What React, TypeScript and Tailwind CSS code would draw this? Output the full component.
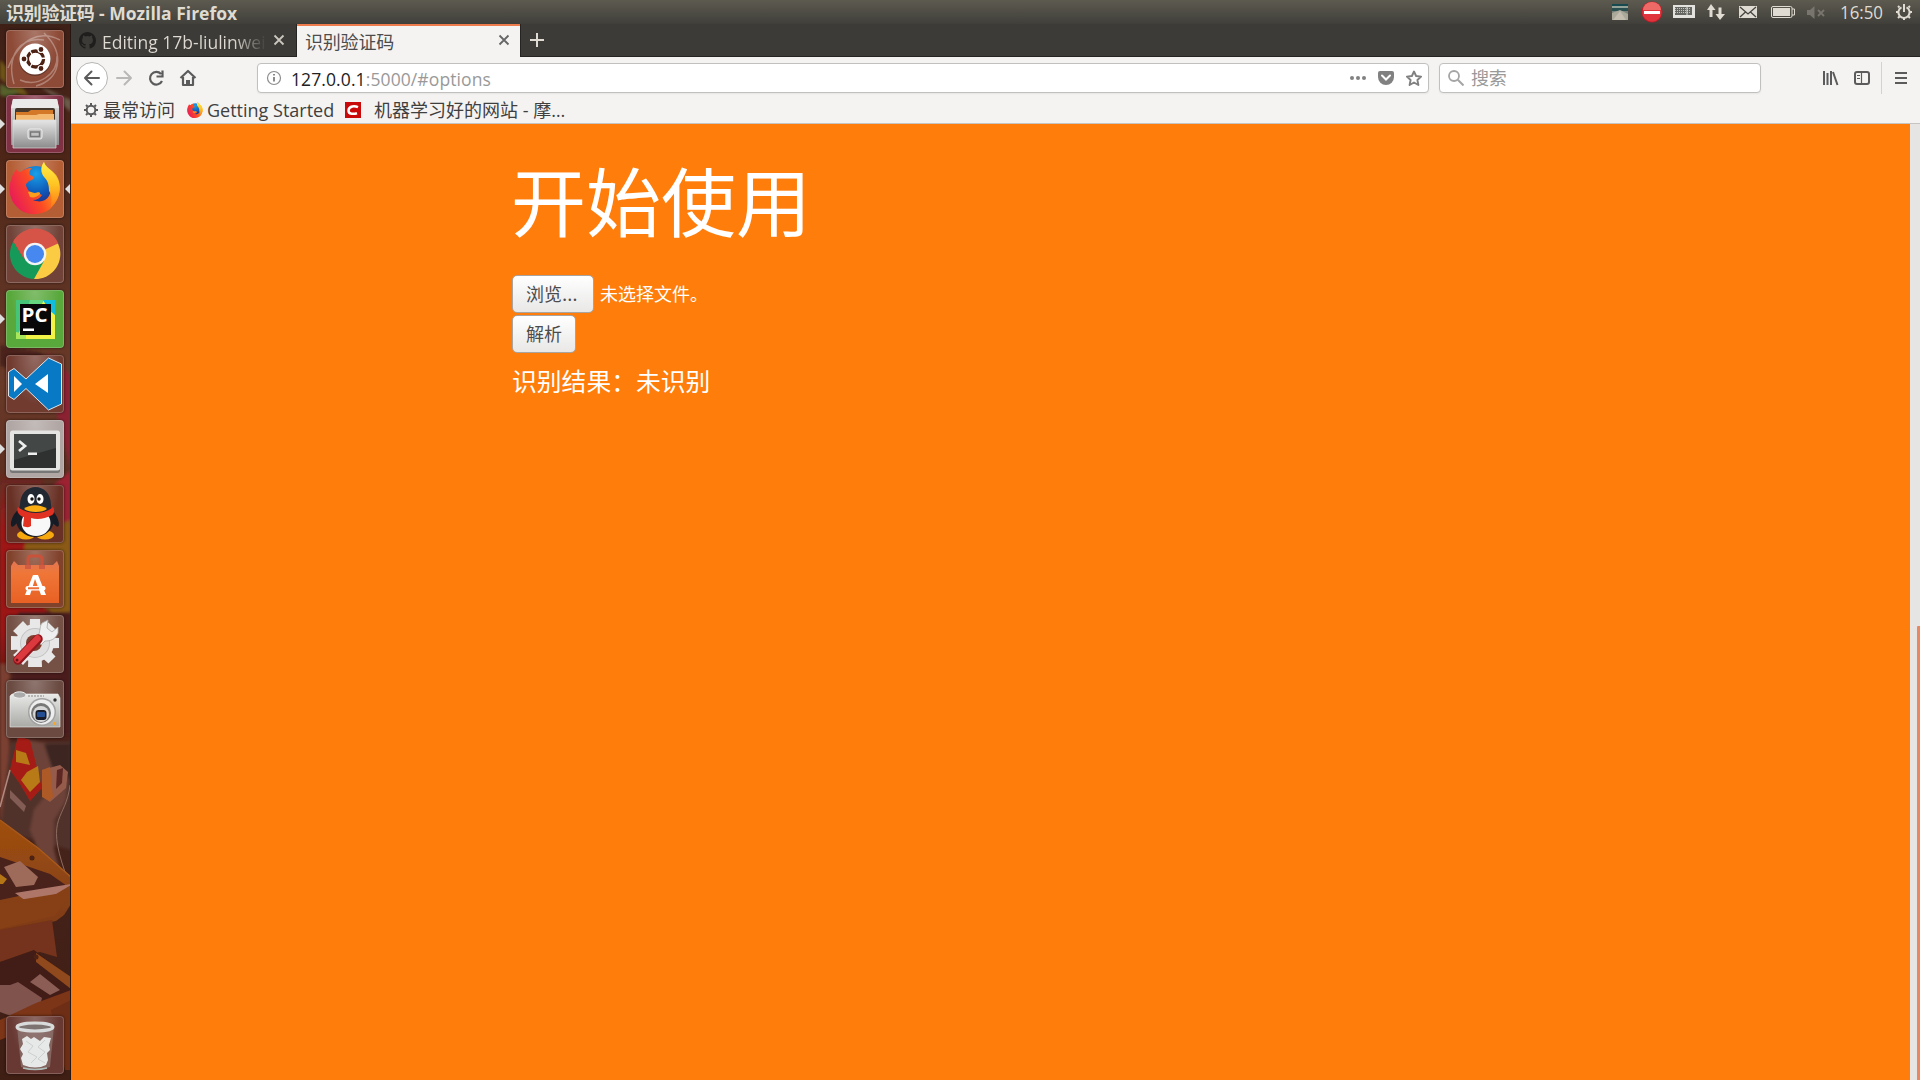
import React from "react";

const sans = "font-['Open_Sans','Noto_Sans_CJK_SC',sans-serif]";

function Wallpaper() {
  return (
    <svg className="absolute inset-0 h-[1056px] w-[71px]" viewBox="0 24 71 1056" preserveAspectRatio="none">
      <defs>
        <linearGradient id="wall" x1="0" y1="0" x2="0" y2="1">
          <stop offset="0" stopColor="#3f2017" />
          <stop offset=".13" stopColor="#4e2618" />
          <stop offset=".25" stopColor="#5f3323" />
          <stop offset=".34" stopColor="#6a3a28" />
          <stop offset=".44" stopColor="#5c2e21" />
          <stop offset=".56" stopColor="#552018" />
          <stop offset=".7" stopColor="#47241c" />
          <stop offset="1" stopColor="#3f1e14" />
        </linearGradient>
        <linearGradient id="redband" x1="0" y1="0" x2="0" y2="1">
          <stop offset="0" stopColor="#a8181a" stopOpacity="0" />
          <stop offset=".3" stopColor="#a01819" />
          <stop offset=".8" stopColor="#9c1614" />
          <stop offset="1" stopColor="#701510" />
        </linearGradient>
        <linearGradient id="crate" x1="0" y1="0" x2="0" y2="1">
          <stop offset="0" stopColor="#a0500f" />
          <stop offset="1" stopColor="#7d3a18" />
        </linearGradient>
        <filter id="soft"><feGaussianBlur stdDeviation="1.6" /></filter>
        <filter id="fine"><feGaussianBlur stdDeviation=".7" /></filter>
      </defs>
      <rect y="24" width="71" height="1056" fill="url(#wall)" />
      <g filter="url(#soft)">
        <path d="M0 60 12 72 30 98 18 94 0 78Z" fill="#6e5518" />
        <path d="M0 84 20 92 10 98 0 95Z" fill="#55602a" />
        <path d="M40 86 71 100V112L50 94Z" fill="#6d5a48" />
        <path d="M0 345 40 352 71 382V412L42 380 0 366Z" fill="#4b211b" />
        <path d="M48 352 71 376V470L58 420Z" fill="#8b2430" />
        <path d="M0 470H40L60 560 30 672H0Z" fill="url(#redband)" />
        <path d="M24 560C22 520 50 510 71 508V616C44 618 26 590 24 560Z" fill="#8a5a18" />
        <path d="M48 490 71 470V520L54 526Z" fill="#9c2232" />
        <path d="M18 612H71V735H8Z" fill="#4c1f1b" />
        <path d="M0 664H10L8 820H0Z" fill="#7c4031" />
        <path d="M10 742H71V850L0 830Z" fill="#51302a" />
        <path d="M18 738 50 744 70 748 66 800 54 820 54 850 60 872 38 850 30 830 34 810 46 795Z" fill="#6d4238" />
        <path d="M44 744H71V780L52 768Z" fill="#3c2822" />
      </g>
      <g filter="url(#fine)">
        <path d="M18 736 30 740 42 788 30 801 20 784 10 770Z" fill="#a51f14" />
        <path d="m16 750 10 3 4 12-14-3Zm11 22 11-6 2 16-10 10-9-12Z" fill="#b77a18" />
        <path d="M42 770 60 765 68 772 66 788 50 802 42 796Z" fill="#965b4c" />
        <path d="m42 770 8-3 3 30-4 4-7-4Z" fill="#ad5a26" />
        <path d="m57 770 6-2-1 15-6 6Z" fill="#5c2824" />
        <path d="M0 807 10 770" stroke="#b08a80" strokeWidth="1.500" />
        <path d="m10 790 16 16-2 6-14-14Z" fill="#825b54" />
        <path d="M70 785C66 820 45 815 65 872" fill="none" stroke="#8d6b60" strokeWidth="1" />
        <path d="M0 820 38 848 71 877V904L64 915 56 921 0 932Z" fill="url(#crate)" />
        <path d="M0 820 38 848 71 877" fill="none" stroke="#a9591b" strokeWidth="1.500" />
        <path d="M0 857 50 874 67 886 0 900Z" fill="#4a211c" />
        <path d="m4 867 16-6 18 16-4 8-18 2Z" fill="#9e6b5a" />
        <path d="m0 874 7 5-4 5H0Z" fill="#b47519" />
        <path d="m15 893 56-9v7L26 901Z" fill="#ad7668" />
        <path d="m0 903 56-9 15-9v8l-16 23-55 13Z" fill="#873f14" />
        <path d="M0 930 52 920 57 957 40 952 0 962Z" fill="#74331a" />
        <path d="M0 962 34 950 71 978V1004L40 1008 0 990Z" fill="#421b17" />
        <path d="m36 953 35 24v12L36 962Z" fill="#90491a" />
        <path d="m30 982 10-8 20 16-10 5Z" fill="#8b5d54" />
        <path d="m10 985 8-3 24 16-4 16-16 6-22-8V985Z" fill="#80524e" />
        <path d="M0 1020 36 1003 71 990V1009L35 1026 0 1040Z" fill="#7b3413" />
        <path d="m51 1010 20-10v70h-6Z" fill="#6e2d12" />
        <circle cx="32" cy="858" r="2.500" fill="#4d2112" />
        <circle cx="36" cy="957" r="2.500" fill="#4d2112" />
      </g>
      <path d="M70.500 24V1080" stroke="#271611" />
    </svg>
  );
}

type TileProps = { bg: string; left?: boolean; right?: boolean; children: React.ReactNode };

function Tile({ bg, left, right, children }: TileProps) {
  return (
    <div className="relative flex w-full shrink-0 pl-1.5">
      <div className={`relative size-[58px] overflow-hidden rounded-[4px] border border-white/20 shadow-[0_0_3px_rgba(0,0,0,0.6)] ${bg}`}>
        <div className="absolute -inset-px bg-radial-[at_50%_0%] from-white/25 to-transparent to-60%" />
        <svg className="absolute -left-px -top-px size-[58px]" viewBox="0 0 58 58">{children}</svg>
      </div>
      {left && (
        <svg className="absolute left-0 top-[23px] h-3 w-[5px]" viewBox="0 0 5 12"><path d="M0 1 5 6 0 11Z" fill="#dedede" /></svg>
      )}
      {right && (
        <svg className="absolute right-px top-[23px] h-3 w-[5px]" viewBox="0 0 5 12"><path d="M5 1 0 6 5 11Z" fill="#dedede" /></svg>
      )}
    </div>
  );
}

function FirefoxArt() {
  return (
    <>
      <defs>
        <linearGradient id="ffr" x1="0" y1=".7" x2="1" y2=".2">
          <stop offset="0" stopColor="#e8195a" />
          <stop offset=".45" stopColor="#fb4a25" />
          <stop offset=".8" stopColor="#ff9a18" />
          <stop offset="1" stopColor="#ffe634" />
        </linearGradient>
        <linearGradient id="ffy" x1="0" y1="0" x2="0" y2="1">
          <stop offset="0" stopColor="#fff04a" />
          <stop offset=".5" stopColor="#ffc423" />
          <stop offset="1" stopColor="#ff7a1a" />
        </linearGradient>
        <radialGradient id="ffb" cx=".5" cy=".2" r=".8">
          <stop offset="0" stopColor="#1aa0e8" />
          <stop offset=".6" stopColor="#0d58b8" />
          <stop offset="1" stopColor="#28257c" />
        </radialGradient>
      </defs>
      <circle cx="30" cy="26" r="20" fill="url(#ffb)" />
      <path d="M5 20C7 13 9 12 10 9c1 2 3 3 5 3 3-3 6-4 11-4-3 3-3 5-2 7l4 2c0 2-2 3-5 4l-3 3c0 4 3 8 7 9 3 1 6 0 9 2-2 3-5 5-9 5 7 3 13 1 16-4 3-6 2-13-1-18-7-5-8-11-4-16 1 5 8 8 12 13 7 10 4 25-6 34-9 7-24 7-32-1C3 40 2 28 5 20Z" fill="url(#ffr)" />
      <path d="M38 2c1 5 8 8 11 13 8 12 5 24-4 32 1-8 1-12-2-16 0-6-1-10-5-14-4-5-3-11 0-15Z" fill="url(#ffy)" />
      <path d="M22 32c3-1 5 1 7 1s5-2 5 1c-3 3-6 4-10 3Z" fill="#ff9e1d" />
    </>
  );
}

function Launcher() {
  return (
    <aside className="relative flex w-[71px] shrink-0 flex-col gap-[7px] overflow-hidden pt-1.5">
      <Wallpaper />
      <Tile bg="bg-[#8d4a36]">
        <path d="M2 38C14 8 34 0 54 10M8 54C0 26 14 6 38 10M30 56C54 50 60 24 38 3M14 50C32 58 52 44 51 26" fill="none" stroke="#fff" strokeOpacity=".3" strokeWidth="1.500" />
        <circle cx="29" cy="30" r="16" fill="#000" opacity=".3" />
        <circle cx="29" cy="29" r="15.500" fill="#fff" />
        <circle cx="29.500" cy="29" r="8" fill="none" stroke="#4d2113" strokeWidth="3.400" />
        <g stroke="#fff" strokeWidth="1.300"><path d="m29 29 12-1M29 29 22 18M29 29 22 40" /></g>
        <circle cx="29.500" cy="29" r="6" fill="#fff" />
        <g fill="#4d2113" stroke="#fff" strokeWidth="1.200"><circle cx="18" cy="29" r="3" /><circle cx="35" cy="19.500" r="3" /><circle cx="35" cy="38.500" r="3" /></g>
      </Tile>
      <Tile bg="bg-[#803043]" left>
        <defs><linearGradient id="cab" x1="0" y1="0" x2="0" y2="1"><stop offset="0" stopColor="#e6e6e6" /><stop offset="1" stopColor="#8c8c8c" /></linearGradient></defs>
        <path d="M7 4H51L53 13V50H5V13Z" fill="url(#cab)" />
        <path d="M7 4H51L53 13H5Z" fill="#e9e9e9" />
        <rect x="9" y="13" width="40" height="15" rx="2" fill="#45392f" />
        <path d="M10 17h12l3-2h22v10H10Z" fill="#d47927" />
        <path d="M10 20h20l3-1h15v7H10Z" fill="#f5ba72" />
        <path d="M7 25H50V53H7Z" fill="url(#cab)" stroke="#ddd" strokeWidth=".7" />
        <rect x="22" y="34" width="14" height="10" rx="2" fill="#bcbcbc" stroke="#eee" />
        <rect x="24.500" y="37" width="9" height="4.500" fill="#c3c3c3" stroke="#777" strokeWidth="1.500" />
      </Tile>
      <Tile bg="bg-[#b45e35]" left right><FirefoxArt /></Tile>
      <Tile bg="bg-[#714338]">
        <path d="M29 29 7.300 16.500A25 25 0 0 1 52 19Z" fill="#d65347" />
        <path d="M29 29 52 18.500A25 25 0 0 1 28 54Z" fill="#fbcb43" />
        <path d="M7.300 16.500A25 25 0 0 0 28 54L38 36 18 34Z" fill="#159a5a" />
        <path d="M29 18H52A25 25 0 0 0 7.300 16.500L18 34Z" fill="#d65347" />
        <circle cx="29" cy="29" r="11.300" fill="#f4f4f4" /><circle cx="29" cy="29" r="9" fill="#4688f0" />
      </Tile>
      <Tile bg="bg-[#59a83c]" left>
        <path d="M10 10H49V49H10Z" fill="#f1f346" />
        <path d="M10 10H38L30 25 10 40Z" fill="#66d67f" /><path d="M10 10H24L12 46H10Z" fill="#46c578" />
        <path d="M37 10H49V25L43 20Z" fill="#13bddc" /><path d="M10 42 20 44V49H10Z" fill="#a8e65a" />
        <path d="M14 14H45V45H14Z" fill="#080808" />
        <text x="15.500" y="32" fontFamily="Open Sans, sans-serif" fontWeight="700" fontSize="19" textLength="26" lengthAdjust="spacingAndGlyphs" fill="#fff">PC</text>
        <path d="M17 38.500H28V41H17Z" fill="#fff" />
      </Tile>
      <Tile bg="bg-[#713b30]">
        <path d="M42.500 3 55.500 9V49L42.500 55 20 33.500 8 44.500 2.500 41V17L8 13.500 20 24Z" fill="#0879c5" stroke="#e5e5e5" strokeWidth="1" />
        <path d="M42 19V38L29 29ZM8 21V37L16 29Z" fill="#fff" />
      </Tile>
      <Tile bg="bg-[#b0a6a3]" left>
        <rect x="4" y="11" width="50" height="42" rx="2.500" fill="#777" />
        <rect x="4" y="10.500" width="50" height="40" rx="2.500" fill="#e4e4e2" />
        <path d="M8 14H50V48H8Z" fill="#2e3130" /><path d="M8 14H50V28L8 40Z" fill="#434847" />
        <path d="m13 21 6 5-6 5" fill="none" stroke="#eee" strokeWidth="2.700" /><path d="M22 32.500h9V35h-9Z" fill="#eee" />
      </Tile>
      <Tile bg="bg-[#693126]">
        <ellipse cx="20" cy="50" rx="9" ry="4.500" fill="#f7a80c" /><ellipse cx="39" cy="50" rx="9" ry="4.500" fill="#f7a80c" />
        <path d="M13 24C4 31 3 45 8 41l7-7M45 24c9 8 10 21 5 17l-8-7" fill="#151b25" />
        <ellipse cx="29" cy="34" rx="19" ry="18" fill="#171c25" /><ellipse cx="30" cy="38" rx="14.500" ry="13" fill="#f8f8f8" />
        <path d="M14 20C14-4 45-4 45 20l1 8H12Z" fill="#222832" />
        <ellipse cx="25" cy="14" rx="3.500" ry="5" fill="#fff" /><ellipse cx="34" cy="14" rx="3.500" ry="5" fill="#fff" />
        <circle cx="26" cy="14" r="1.700" fill="#111" /><circle cx="33" cy="14" r="1.700" fill="#111" />
        <path d="M12 22c10 8 26 8 35 0 2 3 1 7-1 8-7 4-15 5-21 3v8c-3 2-6 1-8 0l1-9c-5-1-8-6-6-10Z" fill="#e03022" />
        <path d="M18 24c5-5 17-5 23 0-4 4-18 4-23 0Z" fill="#faac13" />
      </Tile>
      <Tile bg="bg-[#81422c]">
        <defs><linearGradient id="bag" x1="0" y1="0" x2="0" y2="1"><stop offset="0" stopColor="#e27755" /><stop offset=".3" stopColor="#ef7637" /><stop offset="1" stopColor="#e86024" /></linearGradient></defs>
        <path d="m8 11 4 4H47l4-4 2 5V53H5V16Z" fill="url(#bag)" />
        <path d="M22 18V9c0-2 1-3 3-3h8c2 0 3 1 3 3v9" fill="none" stroke="#c8523a" strokeWidth="3" /><path d="M19 15h6v4h-6Zm14 0h6v4h-6Z" fill="#d15c42" />
        <path d="m19 45 8-20h5l8 20h-5L29 29l-5 16Z" fill="#fff" /><rect x="19.500" y="36" width="20" height="4.500" rx="2" fill="#fff" /><path d="M22 38.300h11" stroke="#ed713a" strokeWidth="2" />
      </Tile>
      <Tile bg="bg-[#745045]">
        <g transform="translate(29 28)" fill="#e8e8e8"><circle r="19" /><path d="M-5-24H5L7 24H-7Z" /><path d="M-5-24H5L7 24H-7Z" transform="rotate(45)" /><path d="M-5-24H5L7 24H-7Z" transform="rotate(90)" /><path d="M-5-24H5L7 24H-7Z" transform="rotate(135)" /></g>
        <circle cx="29" cy="28" r="15" fill="#c3c3c3" /><circle cx="29" cy="28" r="14" fill="#dfdfdf" /><circle cx="28" cy="28" r="8" fill="#803c2d" />
        <path d="M31 22C35 18 33 12 36 8l6-3-1 8 5 4 6-5v6c-3 7-8 8-13 8l-4 4Z" fill="#efefef" stroke="#a9a9a9" strokeWidth=".8" />
        <path d="m12 45 20-21" stroke="#92161e" strokeWidth="9.500" strokeLinecap="round" /><path d="m11.500 44.500 20-21" stroke="#dc393e" strokeWidth="6.500" strokeLinecap="round" /><circle cx="11" cy="45" r="1.500" fill="#6d1216" />
      </Tile>
      <Tile bg="bg-[#6a4a41]">
        <defs><linearGradient id="cam" x1="0" y1="0" x2="0" y2="1"><stop offset="0" stopColor="#e9e9e7" /><stop offset="1" stopColor="#a9a9a6" /></linearGradient></defs>
        <path d="M6 14H52L54 18V47H4V16Z" fill="url(#cam)" stroke="#eee" strokeWidth=".6" />
        <ellipse cx="13.500" cy="15" rx="6.500" ry="3.200" fill="#aaa" stroke="#eee" />
        <path d="M22 16h16" stroke="#888" strokeDasharray="2 1" /><circle cx="49" cy="20" r="1.700" fill="#333" /><path d="M47 42h3v3h-3Z" fill="#f6a62b" />
        <circle cx="36" cy="32" r="14" fill="#a3a3a3" /><circle cx="36" cy="32" r="12.500" fill="#eee" /><circle cx="35" cy="33" r="10" fill="#777" /><circle cx="35" cy="34" r="8" fill="#d7d7d7" /><rect x="29.500" y="30" width="11" height="10" rx="3" fill="#181c2a" /><rect x="31" y="32" width="8" height="5" rx="1" fill="#244e93" />
      </Tile>
      <div className="mt-auto pb-1.5">
        <Tile bg="bg-[#683832]">
          <path d="M11 10H48L44 51Q29 56 15 51Z" fill="#9d8f8b" fillOpacity=".5" />
          <path d="m16 23 5-3 4 3 3-2 6 4 4-4 7 1-2 7 1 5-3 3 1 7-2 5q-10 5-23 0l-2-7 2-4-3-5 3-5Z" fill="#e7e9e8" />
          <path d="m20 25 7 5-5 6 9 5-6 6M39 24l-7 7 7 5-7 7 7 4" fill="none" stroke="#ccd0cf" />
          <ellipse cx="29" cy="11" rx="18" ry="4" fill="#7d7370" stroke="#d9dbda" strokeWidth="3" /><path d="M17 52q12 3 24 0" fill="none" stroke="#afbdb9" strokeWidth="1.500" />
        </Tile>
      </div>
    </aside>
  );
}

function MenuBar() {
  return (
    <header className="flex h-6 shrink-0 items-center justify-between bg-linear-to-b from-[#5d5b50] to-[#403f3a] pl-1.5 text-[#dfdbd2]">
      <h1 className="whitespace-nowrap pt-0.5 text-[18px] leading-6 font-bold">
        <span className="tracking-[-0.3px]">识别验证码</span><span className="text-[17.5px]"> - Mozilla Firefox</span>
      </h1>
      <svg className="h-6 w-[308px]" viewBox="1612 0 308 24">
        <path d="M1612 4h16v16h-16Z" fill="#78827a" /><path d="M1612 4h16v2h-16Z" fill="#164a50" /><path d="M1612 6h16v3l-16-1Z" fill="#94a298" /><path d="M1612 8h16v3h-16Z" fill="#294f50" /><path d="m1612 13 8-3 8 4v6h-16Z" fill="#aaa99a" /><path d="m1613 20 7-9 6 9Z" fill="#c3beb0" />
        <circle cx="1652" cy="12" r="10.500" fill="#bd1d2b" /><circle cx="1652" cy="12" r="9.700" fill="#df343b" /><path d="M1643 10a9 8 0 0 1 18 0Z" fill="#ee6a66" /><path d="M1644 11h16v3h-16Z" fill="#fff" />
        <path d="M1673 5h22v13h-22Z" fill="#e4e2de" /><path d="M1675 7h17v8h-17Z" fill="#666662" /><path d="M1675 8.500h15m-15 2h15m-15 2h15" stroke="#c6c4bf" strokeDasharray="1 1" /><path d="M1687 7v8" stroke="#ddd" />
        <path d="m1707 10 4-6 4.500 6h-3v7h-3v-7ZM1720 20l-4.500-6h3V7.500h3V14h3.500Z" fill="#dfdbd2" />
        <path d="M1739 6h18v12h-18Z" fill="#dfdbd2" /><path d="m1740 7 8 7 8-7m-16 10 5.500-5m10.500 5-5.500-5" fill="none" stroke="#44433e" strokeWidth="1.300" />
        <rect x="1771.500" y="6.500" width="20.500" height="11" rx="1.500" fill="none" stroke="#dfdbd2" /><path d="M1773 8h17v8h-17Z" fill="#dfdbd2" /><path d="M1792 9h2.500v6h-2.500" fill="none" stroke="#dfdbd2" />
        <path d="M1807 10h3l4.500-4v13l-4.500-4h-3Z" fill="#77756d" /><path d="m1818 10 6 6m0-6-6 6" stroke="#77756d" strokeWidth="1.800" />
        <text x="1840" y="18.500" fontSize="17.500" textLength="43" lengthAdjust="spacingAndGlyphs" fill="#dfdbd2">16:50</text>
        <g stroke="#dfdbd2" fill="none" strokeWidth="2"><path d="M1901.500 7.300a5.600 5.600 0 1 0 5 0M1904 4v8" /><path d="m1898 6 1.500 1.500M1910 6l-1.500 1.500M1896 12h2m12 0h2m-14 6 1.500-1.500M1910 18l-1.500-1.500M1904 18v2" /></g>
      </svg>
    </header>
  );
}

const Close = ({ color }: { color: string }) => (
  <svg className="size-3 shrink-0" viewBox="0 0 12 12"><path d="m1.500 1.500 9 9m0-9-9 9" stroke={color} strokeWidth="1.800" /></svg>
);

function Tabs() {
  return (
    <div className="flex h-[33px] shrink-0 bg-[#3c3b37]">
      <div className="flex w-[226px] items-center border-b border-r border-[#252422] pl-2">
        <svg className="size-[17px] shrink-0" viewBox="0 0 16 16" fill="#1f1e1d"><path d="M8 0C3.580 0 0 3.580 0 8c0 3.540 2.290 6.530 5.470 7.590.4.070.55-.17.55-.38 0-.19-.01-.82-.01-1.490-2.010.37-2.530-.49-2.690-.94-.09-.23-.48-.94-.82-1.130-.28-.15-.68-.52-.01-.53.63-.01 1.080.58 1.230.82.72 1.210 1.870.87 2.330.66.07-.52.28-.87.51-1.070-1.780-.2-3.640-.89-3.640-3.950 0-.87.31-1.590.82-2.150-.08-.2-.36-1.020.08-2.120 0 0 .67-.21 2.200.82a7.600 7.600 0 0 1 4 0c1.530-1.040 2.200-.82 2.200-.82.44 1.100.16 1.920.08 2.120.51.56.82 1.270.82 2.150 0 3.070-1.870 3.750-3.650 3.950.29.25.54.73.54 1.480 0 1.070-.01 1.930-.01 2.200 0 .21.15.46.55.38A8 8 0 0 0 16 8c0-4.420-3.580-8-8-8Z" /></svg>
        <span className="ml-1.5 w-[165px] overflow-hidden whitespace-nowrap bg-linear-to-r from-[#dfdbd2] from-80% to-[#3c3b37] bg-clip-text pt-1 text-[17.5px] leading-7 text-transparent">Editing 17b-liulinwei</span>
        <span className="ml-1.5 flex"><Close color="#cbc7be" /></span>
      </div>
      <div className="flex w-[223px] items-center border-t-2 border-[#ee7b4c] bg-[#f4f3f2] pl-2 pr-[10px]">
        <span className="grow pt-px text-[18px] leading-7 tracking-[-0.2px] text-[#4c4c4c]">识别验证码</span><span className="flex pb-1"><Close color="#666" /></span>
      </div>
      <div className="grow border-b border-l border-[#252422] pl-2 pt-2">
        <svg className="size-4" viewBox="0 0 16 16"><path d="M8 1v14M1 8h14" stroke="#dfdbd2" strokeWidth="2" /></svg>
      </div>
    </div>
  );
}

function NavBar() {
  return (
    <div className="flex h-[42px] shrink-0 items-center">
      <svg className="h-[42px] w-[186px] shrink-0" viewBox="71 57 186 42" fill="none" stroke="#5b5b5b" strokeWidth="2">
        <circle cx="92" cy="78" r="15.500" fill="#fff" stroke="#b5b5b4" strokeWidth="1" />
        <path d="M99 78H85m6.500-6.500L85 78l6.500 6.500" strokeLinecap="round" strokeLinejoin="round" />
        <path d="M117 78h14m-6.500-6.500L131 78l-6.500 6.500" stroke="#b9b8b7" strokeLinecap="round" strokeLinejoin="round" />
        <path d="M162 81a6.300 6.300 0 1 1-1-7M162.500 70.500v6h-6" strokeWidth="2.200" />
        <path d="m180.500 78 7.500-7 7.500 7M183 77v8h10v-8" strokeWidth="2.200" strokeLinejoin="round" /><path d="M186 80h4v5h-4Z" fill="#5b5b5b" stroke="none" />
      </svg>
      <div className="flex h-[30px] w-[1172px] items-center rounded-[4px] border border-[#c0c0be] bg-white shadow-[0_1px_2px_rgba(0,0,0,0.06)]">
        <svg className="ml-2 size-4" viewBox="0 0 16 16"><circle cx="8" cy="8" r="6.500" fill="none" stroke="#8d8d8d" strokeWidth="1.200" /><path d="M8 7v4.500M8 4v1.600" stroke="#777" strokeWidth="1.700" /></svg>
        <span className="ml-[9px] grow whitespace-nowrap pt-0.5 text-[17.5px] leading-7 tracking-[0.1px] text-[#999]"><span className="text-[#222]">127.0.0.1</span>:5000/#options</span>
        <svg className="h-7 w-[80px]" viewBox="1348 64 80 28"><g fill="#818181"><circle cx="1352" cy="78" r="2" /><circle cx="1358" cy="78" r="2" /><circle cx="1364" cy="78" r="2" /><path d="M1380 71h12q2 0 2 2v4a8 8 0 0 1-16 0v-4q0-2 2-2Z" /></g><path d="m1382 75.500 4 4 4-4" fill="none" stroke="#fff" strokeWidth="2" strokeLinecap="round" /><path d="m1414 71.500 2.100 4.500 5 .6-3.700 3.400 1 5-4.400-2.500-4.400 2.500 1-5-3.700-3.400 5-.6Z" fill="none" stroke="#818181" strokeWidth="1.900" strokeLinejoin="round" /></svg>
      </div>
      <div className="ml-2.5 flex h-[30px] w-[322px] items-center rounded-[4px] border border-[#c0c0be] bg-white pl-2 shadow-[0_1px_2px_rgba(0,0,0,0.06)]">
        <svg className="size-4" viewBox="0 0 16 16" fill="none" stroke="#a5a5a5"><circle cx="6" cy="6" r="5" strokeWidth="1.800" /><path d="m9.800 9.800 5.700 5.700" strokeWidth="2" /></svg>
        <span className="ml-[7px] text-[18px] leading-7 tracking-[-0.2px] text-[#999]">搜索</span>
      </div>
      <svg className="ml-auto h-[42px] w-[110px]" viewBox="1810 57 110 42" fill="none" stroke="#5b5b5b">
        <path d="M1824 71v14M1827.500 73v12M1831 71v14M1833 72l4.500 13" strokeWidth="2" />
        <rect x="1855" y="72" width="14" height="12" rx="2" strokeWidth="2" /><path d="M1861.500 72v12M1857 75.500h3m-3 3h3" strokeWidth="1.200" />
        <path d="M1881.500 62v32" stroke="#d3d2d1" /><path d="M1895 73h12m-12 5h12m-12 5h12" strokeWidth="2" />
      </svg>
    </div>
  );
}

function Bookmarks() {
  return (
    <div className="flex h-[25px] shrink-0 items-center whitespace-nowrap border-b border-[#c6c4c2] pb-0.5 pl-3 text-[18px] leading-[22px] text-[#3f3f3f]">
      <svg className="size-4 shrink-0" viewBox="0 0 16 16" stroke="#5b5b5b" strokeWidth="2" fill="none"><circle cx="8" cy="8" r="4.300" /><path d="M8 1v2M8 13v2M1 8h2M13 8h2M3 3l1.500 1.500M11.500 11.500 13 13M13 3l-1.500 1.500M4.500 11.500 3 13" /></svg>
      <span className="ml-1 w-[84px]">最常访问</span>
      <svg className="size-4 shrink-0" viewBox="3 2 52 52"><FirefoxArt /></svg>
      <span className="ml-1 w-[126px]">Getting Started</span>
      <svg className="ml-3 size-4 shrink-0" viewBox="0 0 16 16"><path d="M0 0h16v16H0Z" fill="#c90a0a" /><path d="M13 5.200C10 3.800 4 3.500 3.500 8.300 3.200 12.500 9 12.200 12 11.200" fill="none" stroke="#fff" strokeWidth="2.500" /></svg>
      <span className="ml-[13px]">机器学习好的网站 - 摩<span className="tracking-[1px]">…</span></span>
    </div>
  );
}

const button = "flex h-[38px] items-center rounded-[5px] border border-[#a9a49f] bg-linear-to-b from-white to-[#e9e8e7] px-[13px] text-[18px] leading-7 text-[#4c4c4c]";

function Page() {
  return (
    <div className="flex grow">
      <main className="flex grow flex-col items-start bg-[#ff7d0a] pl-[441px] text-white">
        <h2 className="-ml-px mt-[26px] text-[75px] leading-[104px]">开始使用</h2>
        <div className="mt-[21px] flex items-center gap-1.5 text-[18px]">
          <button className={`${button} w-[82px]`}>浏览<span className="text-[20px]">…</span></button><span className="pt-px">未选择文件。</span>
        </div>
        <button className={`${button} mt-0.5 w-16`}>解析</button>
        <p className="mt-2.5 text-[24.8px] leading-9">识别结果：未识别</p>
      </main>
      <div className="w-2.5 bg-[#e6e5e4] pl-[7px] pt-[502px]"><div className="h-full rounded-tl-[1px] bg-[#eb8660]" /></div>
    </div>
  );
}

export default function App() {
  return (
    <div className={`flex h-screen w-screen flex-col overflow-hidden ${sans}`}>
      <MenuBar />
      <div className="flex min-h-0 grow">
        <Launcher />
        <div className="flex min-w-0 grow flex-col bg-[#f4f3f2]">
          <Tabs />
          <NavBar />
          <Bookmarks />
          <Page />
        </div>
      </div>
    </div>
  );
}
